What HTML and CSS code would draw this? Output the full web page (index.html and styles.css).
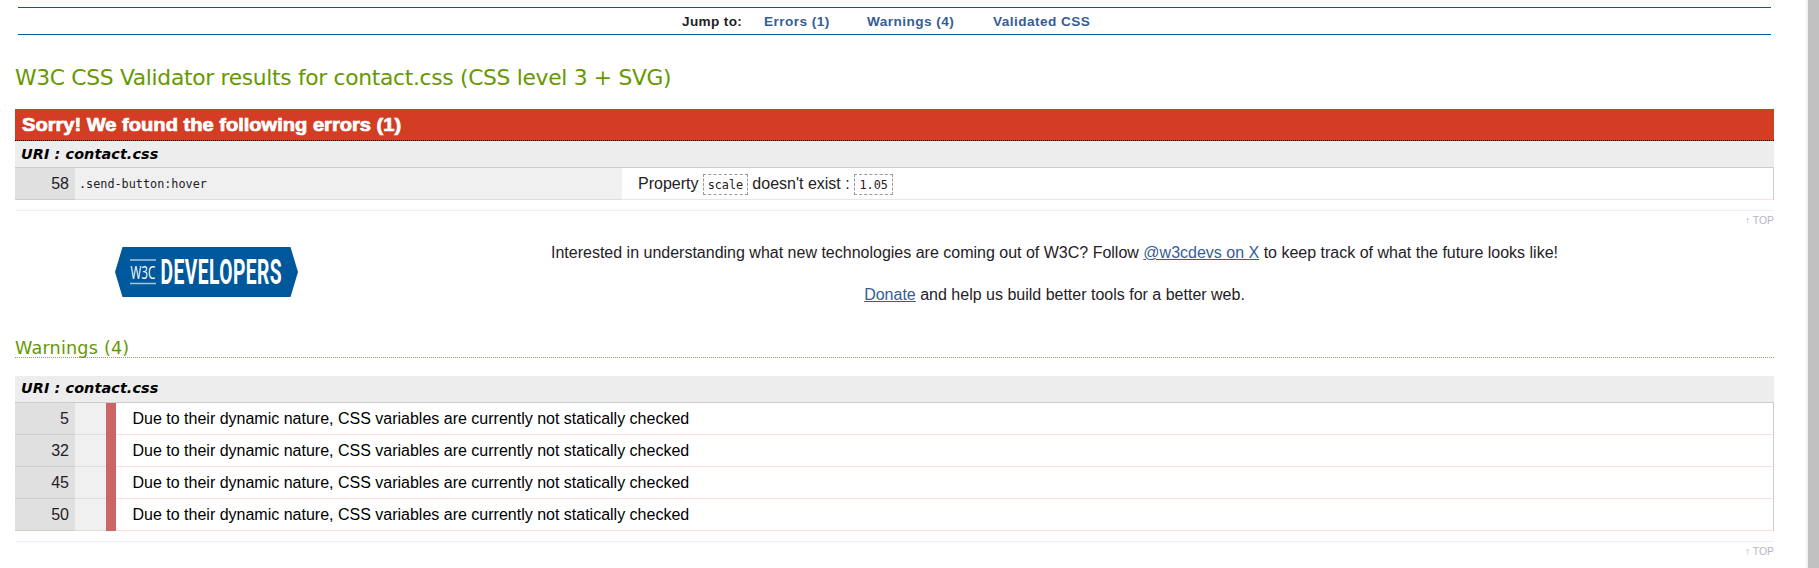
FILE: index.html
```html
<!DOCTYPE html>
<html lang="en">
<head>
<meta charset="utf-8">
<title>W3C CSS Validator results for contact.css</title>
<link rel="stylesheet" href="styles.css">
</head>
<body>
<div class="page">
  <main class="content">
    <nav class="jumpbar">
      <strong class="jump-label">Jump to:</strong>
      <a class="jump-errors">Errors (1)</a>
      <a class="jump-warnings">Warnings (4)</a>
      <a class="jump-css">Validated CSS</a>
    </nav>
    <h2 class="title"><span>W3C CSS Validator results for contact.css (CSS level 3 + SVG)</span></h2>
    <section class="errors">
      <h3 class="invalid"><span>Sorry! We found the following errors (1)</span></h3>
      <h4 class="uri"><span>URI : contact.css</span></h4>
      <div class="row error-row">
        <div class="line">58</div>
        <div class="context"><code>.send-button:hover</code></div>
        <div class="message">Property <code class="exp scale">scale</code> doesn't exist : <code class="exp value">1.05</code></div>
      </div>
    </section>
    <p class="top"><a>↑ TOP</a></p>
    <section class="promo">
      <svg class="logo" width="184" height="52" viewBox="0 0 184 52">
        <path d="M7.500 1H175.500L183 26L175.500 51H7.500L0 26Z" fill="#00589c"/>
        <path d="M15 14H41M15 37.500H41" stroke="#a6c6df" stroke-width="1.500"/>
        <text class="logo-w3c" transform="translate(15.500 32.500) scale(.67 1)">W3C</text>
        <text class="logo-dev" transform="translate(45.500 38) scale(.558 1)">DEVELOPERS</text>
      </svg>
      <div class="promo-text">
        <p>Interested in understanding what new technologies are coming out of W3C? Follow <a>@w3cdevs on X</a> to keep track of what the future looks like!</p>
        <p><a>Donate</a> and help us build better tools for a better web.</p>
      </div>
    </section>
    <section class="warnings">
      <h3 class="warn-title"><span>Warnings (4)</span></h3>
      <h4 class="uri"><span>URI : contact.css</span></h4>
      <div class="row"><div class="line">5</div><div class="level"></div><div class="message">Due to their dynamic nature, CSS variables are currently not statically checked</div></div>
      <div class="row"><div class="line">32</div><div class="level"></div><div class="message">Due to their dynamic nature, CSS variables are currently not statically checked</div></div>
      <div class="row"><div class="line">45</div><div class="level"></div><div class="message">Due to their dynamic nature, CSS variables are currently not statically checked</div></div>
      <div class="row"><div class="line">50</div><div class="level"></div><div class="message">Due to their dynamic nature, CSS variables are currently not statically checked</div></div>
    </section>
    <p class="top"><a>↑ TOP</a></p>
  </main>
  <div class="scrollbar"></div>
</div>
</body>
</html>
```
FILE: styles.css
```css
* { box-sizing: border-box; }
body { margin: 0; background: #fff; color: #1f2126; font: 16px "Liberation Sans", Arial, sans-serif; overflow: hidden; }
h2, h3, h4, p { margin: 0; font-weight: normal; }
.page { display: flex; justify-content: space-between; height: 568px; }
.content { width: 1759px; margin-left: 15px; padding-top: 7px; }
.scrollbar { width: 13px; background: #c1c1c1; border-left: 2px solid #f1f1f1; }

.jumpbar { display: flex; width: 1753px; height: 28px; margin-left: 3px; padding-left: 664px; border: solid #005a9c; border-width: 1px 0; font-size: 13.6px; font-weight: bold; line-height: 27px; letter-spacing: .45px; color: #365d95; white-space: nowrap; }
.jump-label { width: 82px; color: #1f2126; letter-spacing: .35px; }
.jump-errors { width: 103px; }
.jump-warnings { width: 126px; }

.title { height: 74px; padding: 29px 0 0; font: 21.8px/28px "DejaVu Sans", Verdana, sans-serif; letter-spacing: -.31px; color: #690; white-space: nowrap; }
.invalid { height: 32px; padding-left: 7px; background: #d23d24; border-bottom: 1px dotted #000; color: #fff; font-weight: 900; font-size: 17.600px; line-height: 32px; -webkit-text-stroke: .7px #fff; white-space: nowrap; }
.invalid span { display: inline-block; transform: scaleX(1.142); transform-origin: left; }
.uri { height: 27px; padding-left: 6px; background: #ededed; border-bottom: 1px solid #ccc; color: #000; font: italic bold 14.400px/26px "DejaVu Sans", Verdana, sans-serif; letter-spacing: .1px; white-space: nowrap; }
.warnings .uri { line-height: 25px; }

.row { display: flex; height: 32px; line-height: 31px; }
.line { width: 60px; padding-right: 6px; background: #e0e0e0; border-bottom: 1px solid #ccc; text-align: right; }
.context { width: 547px; padding: 1px 0 0 4px; background: #f0f0f0; border-bottom: 1px solid #ddd; font-size: 12px; }
.level { width: 41px; background: #f0f0f0; border-right: 10px solid #c66; }
.message { flex: 1; padding-left: 17px; border-bottom: 1px solid #fdd; border-right: 1px solid #ccc; color: #000; white-space: nowrap; }
.warnings .level { background: linear-gradient(#ddd, #ddd) bottom / 100% 1px no-repeat padding-box, #f0f0f0; }
.warnings .message { padding-left: 16.5px; }
.error-row .message { display: flex; align-items: center; padding: 0 0 1px 16px; color: #1f2126; white-space: pre; }
code { font-family: "DejaVu Sans Mono", Consolas, monospace; font-size: 11.8px; }
.exp { height: 21px; margin-top: 3px; border: 1px dashed #999; text-align: center; line-height: 21px; }
.scale { width: 45px; }
.value { width: 39px; }

.top { height: 16px; margin-top: 10px; border-top: 1px solid #eef; font-size: 10.4px; line-height: 20px; text-align: right; color: #b5b3cb; }

.promo { display: flex; height: 113px; padding: 20px 0 0 100px; }
.logo { flex: none; }
.logo-w3c { font: 17.5px "Open Sans", sans-serif; fill: #fff; }
.logo-dev { font: bold 34.5px Roboto, sans-serif; letter-spacing: .8px; fill: #fff; }
.promo-text { flex: none; width: 1511px; margin: -2px 0 0; text-align: center; line-height: 18px; }
.promo-text p { margin-bottom: 24px; }
.promo a { color: #365d95; text-decoration: underline; }

.warn-title { height: 19px; margin-bottom: 18px; border-bottom: 1px dotted #9a9a66; color: #690; font: 17.600px/19px "DejaVu Sans", Verdana, sans-serif; letter-spacing: .2px; }
```
